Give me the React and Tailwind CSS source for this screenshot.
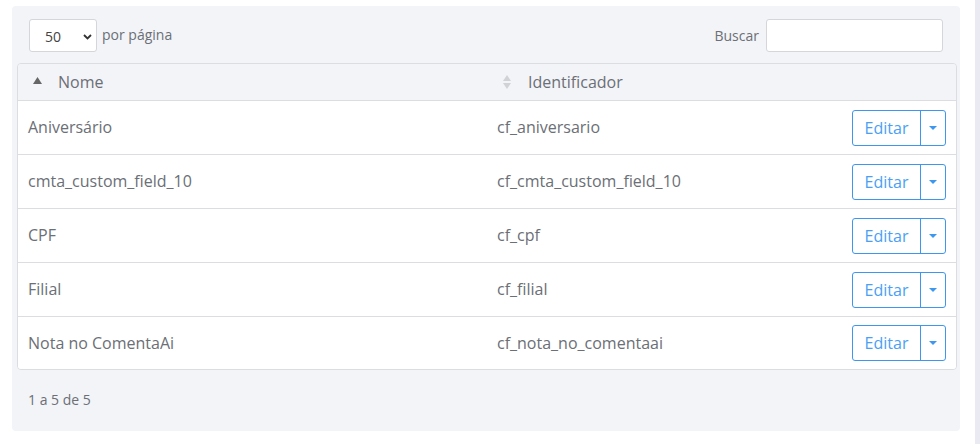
import React from "react";

const rows = [
  ["Aniversário", "cf_aniversario"],
  ["cmta_custom_field_10", "cf_cmta_custom_field_10"],
  ["CPF", "cf_cpf"],
  ["Filial", "cf_filial"],
  ["Nota no ComentaAi", "cf_nota_no_comentaai"],
];

export default function App() {
  return (
    <div
      className="flex w-[980px] h-[444px] bg-white text-[#6b6f76]"
      style={{ fontFamily: '"Open Sans", "Liberation Sans", sans-serif' }}
    >
      <div className="ml-[12px] mt-[6px] w-[948px] h-[425px] bg-[#f3f4f8] rounded-[4px] pt-[13px] flex flex-col">
        <div className="flex items-center justify-between px-[17px] h-[33px]">
          <div className="flex items-center">
            <div className="relative w-[68px] h-[33px] bg-white border border-[#d4d6da] rounded-[3px] flex items-center">
              <span className="text-[14px] text-[#444] ml-[15px] mt-[1px]">50</span>
              <svg className="absolute left-[53px] top-[14px]" width="9" height="6" viewBox="0 0 9 6">
                <path d="M1 1l3.5 3.5L8 1" fill="none" stroke="#333" strokeWidth="1.8" />
              </svg>
            </div>
            <span className="text-[14px] ml-[5px] -mt-[3px]">por página</span>
          </div>
          <div className="flex items-center">
            <span className="text-[14px] mr-[7px] -mt-[1px]">Buscar</span>
            <div className="w-[177px] h-[33px] bg-white border border-[#d4d6da] rounded-[3px]" />
          </div>
        </div>
        <div className="mt-[11px] ml-[5px] w-[940px] border border-[#dcdde0] rounded-[4px] overflow-hidden">
          <div className="flex items-center h-[37px] bg-[#f3f4f8] border-b border-[#dcdde0] text-[16px]">
            <div className="w-[469px] flex items-center">
              <svg className="ml-[15px] -mt-[4px]" width="9" height="7" viewBox="0 0 9 7">
                <path d="M4.5 0L9 7H0z" fill="#666" />
              </svg>
              <span className="ml-[16px]">Nome</span>
            </div>
            <div className="flex items-center">
              <svg className="ml-[16px]" width="8" height="14" viewBox="0 0 8 14">
                <path d="M4 0L8 6H0z" fill="#d0d2d6" />
                <path d="M4 14L8 8H0z" fill="#d0d2d6" />
              </svg>
              <span className="ml-[17px]">Identificador</span>
            </div>
          </div>
          {rows.map(([a, b], i) => (
            <div
              key={a}
              className={`flex items-center bg-white text-[16px] ${i < rows.length - 1 ? "h-[54px] border-b border-[#dcdde0]" : "h-[52px]"}`}
            >
              <div className="w-[469px] pl-[10px] -mt-[1px]">{a}</div>
              <div className="flex-1 pl-[10px] -mt-[1px]">{b}</div>
              <div className="flex mr-[10px] h-[36px] border border-[#3d97ef] rounded-[3px]">
                <div className="w-[68px] flex items-center justify-center text-[#4a9ff5] text-[16px] border-r border-[#3d97ef]">
                  Editar
                </div>
                <div className="w-[24px] flex items-center justify-center">
                  <svg width="8" height="4" viewBox="0 0 8 4">
                    <path d="M0 0h8L4 4z" fill="#3d97ef" />
                  </svg>
                </div>
              </div>
            </div>
          ))}
        </div>
        <div className="ml-[16px] mt-[19px] text-[14px]">1 a 5 de 5</div>
      </div>
      <div className="ml-[15px] w-[5px] h-full bg-[#e9eaf2]" />
    </div>
  );
}
